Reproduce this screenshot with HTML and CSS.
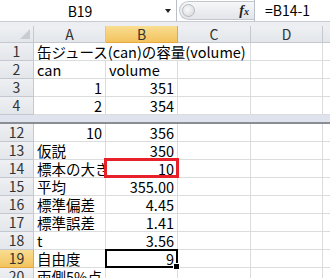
FILE: index.html
```html
<!DOCTYPE html>
<html lang="ja">
<head>
  <meta charset="UTF-8">
  <title>Sheet</title>
  <link rel="stylesheet" href="styles.css">
</head>
<body>
<div class="fbar">
  <div class="namebox">
    <span class="name">B19</span>
    <span class="drop"></span>
  </div>
  <div class="grip">
    <span class="knob"></span>
    <span class="fx"><i>f</i><i class="x">x</i></span>
  </div>
  <div class="formula">=B14-1</div>
</div>
<div class="gap"></div>
<div class="sheet">
  <div class="hd corner"><span class="tri"></span></div>
  <div class="hd col">A</div>
  <div class="hd col on">B</div>
  <div class="hd col">C</div>
  <div class="hd col">D</div>
  <div class="hd col last"></div>

  <div class="hd rn">1</div>
  <div class="c txt span3">缶ジュース(can)の容量(volume)</div>
  <div class="c"></div>
  <div class="c last"></div>

  <div class="hd rn">2</div>
  <div class="c txt">can</div>
  <div class="c txt">volume</div>
  <div class="c"></div><div class="c"></div><div class="c last"></div>

  <div class="hd rn">3</div>
  <div class="c num">1</div>
  <div class="c num">351</div>
  <div class="c"></div><div class="c"></div><div class="c last"></div>

  <div class="hd rn">4</div>
  <div class="c num">2</div>
  <div class="c num">354</div>
  <div class="c"></div><div class="c"></div><div class="c last"></div>

  <div class="freeze"></div>

  <div class="hd rn">12</div>
  <div class="c num">10</div>
  <div class="c num">356</div>
  <div class="c"></div><div class="c"></div><div class="c last"></div>

  <div class="hd rn">13</div>
  <div class="c txt">仮説</div>
  <div class="c num">350</div>
  <div class="c"></div><div class="c"></div><div class="c last"></div>

  <div class="hd rn">14</div>
  <div class="c txt clip">標本の大きさ</div>
  <div class="c num mark">10</div>
  <div class="c"></div><div class="c"></div><div class="c last"></div>

  <div class="hd rn">15</div>
  <div class="c txt">平均</div>
  <div class="c num">355.00</div>
  <div class="c"></div><div class="c"></div><div class="c last"></div>

  <div class="hd rn">16</div>
  <div class="c txt">標準偏差</div>
  <div class="c num">4.45</div>
  <div class="c"></div><div class="c"></div><div class="c last"></div>

  <div class="hd rn">17</div>
  <div class="c txt">標準誤差</div>
  <div class="c num">1.41</div>
  <div class="c"></div><div class="c"></div><div class="c last"></div>

  <div class="hd rn">18</div>
  <div class="c txt">t</div>
  <div class="c num">3.56</div>
  <div class="c"></div><div class="c"></div><div class="c last"></div>

  <div class="hd rn on">19</div>
  <div class="c txt">自由度</div>
  <div class="c num sel">9</div>
  <div class="c"></div><div class="c"></div><div class="c last"></div>

  <div class="hd rn">20</div>
  <div class="c txt">両側5%点</div>
  <div class="c"></div>
  <div class="c"></div><div class="c"></div><div class="c last"></div>
</div>
</body>
</html>
```

FILE: styles.css
```css
*{
  box-sizing:border-box;
}
body{
  margin:0;
  width:330px;
  height:278px;
  overflow:hidden;
  background:#fff;
  font-family:"Noto Sans CJK JP","Liberation Sans",sans-serif;
  color:#000;
}
.fbar{
  display:flex;
  height:22px;
  background:#fff;
  border-bottom:1px solid #c8ccd2;
}
.namebox{
  width:177px;
  display:flex;
  align-items:center;
  border-right:1px solid #b9c0ca;
}
.name{
  width:160px;
  text-align:center;
  font-size:14px;
}
.drop{
  width:0;
  height:0;
  border-left:3px solid transparent;
  border-right:3px solid transparent;
  border-top:4px solid #222;
  margin-left:5px;
}
.grip{
  width:75px;
  height:19px;
  margin:1px 0 0 2px;
  display:flex;
  align-items:center;
  justify-content:space-between;
  padding:0 5px 0 2px;
  border:1px solid #c3c7cd;
  border-right:none;
  border-radius:10px 0 0 10px;
  background:linear-gradient(#f6f7f9,#e2e5e9);
}
.knob{
  width:13px;
  height:13px;
  border-radius:50%;
  background:radial-gradient(circle at 40% 40%,#fafafa,#d2d5da);
  border:1px solid #b5b9c0;
}
.fx{
  font-family:"Liberation Serif",serif;
  font-weight:bold;
  font-size:14px;
  color:#222;
}
.fx .x{
  font-size:10px;
}
.formula{
  flex:1;
  border-left:1px solid #b9c0ca;
  padding-left:10px;
  font-size:14px;
  line-height:21px;
}
.gap{
  height:4px;
  background:#eceef1;
}
.sheet{
  display:grid;
  grid-template-columns:34px 72px 72px 73px 72px 1fr;
  grid-template-rows:17px repeat(4,18px) 9px repeat(9,18px);
}
.hd{
  background:linear-gradient(#eef0f3,#e3e6ea);
  border-right:1px solid #c5c9cf;
  border-bottom:1px solid #c5c9cf;
  color:#333;
  font-size:14px;
  text-align:center;
  line-height:16px;
  overflow:hidden;
}
.hd.on{
  background:linear-gradient(#f9dd91,#f3c35e);
  border-color:#e5a83c;
}
.corner{
  position:relative;
}
.tri{
  position:absolute;
  right:3px;
  bottom:3px;
  width:0;
  height:0;
  border-left:10px solid transparent;
  border-bottom:10px solid #c9ccd1;
}
.c{
  border-right:1px solid #dadcdd;
  border-bottom:1px solid #dadcdd;
  font-size:14.5px;
  line-height:17px;
  white-space:nowrap;
  padding:0 3px;
}
.clip{
  overflow:hidden;
}
.last{
  border-right:none;
}
.span3{
  grid-column:span 3;
}
.num{
  text-align:right;
}
.freeze{
  grid-column:1 / -1;
  background:#dfe3ed;
  border-bottom:2px solid #8a8d93;
}
.mark,.sel{
  position:relative;
}
.mark::after{
  content:"";
  position:absolute;
  left:-2px;
  top:-2px;
  right:-2px;
  bottom:-1px;
  border:3px solid #e8202a;
}
.sel::after{
  content:"";
  position:absolute;
  left:-1px;
  top:-1px;
  right:-1px;
  bottom:-1px;
  border:2px solid #000;
}
.sel::before{
  content:"";
  position:absolute;
  right:-3px;
  bottom:-3px;
  width:5px;
  height:5px;
  background:#000;
  border:1px solid #fff;
  z-index:1;
}
```
